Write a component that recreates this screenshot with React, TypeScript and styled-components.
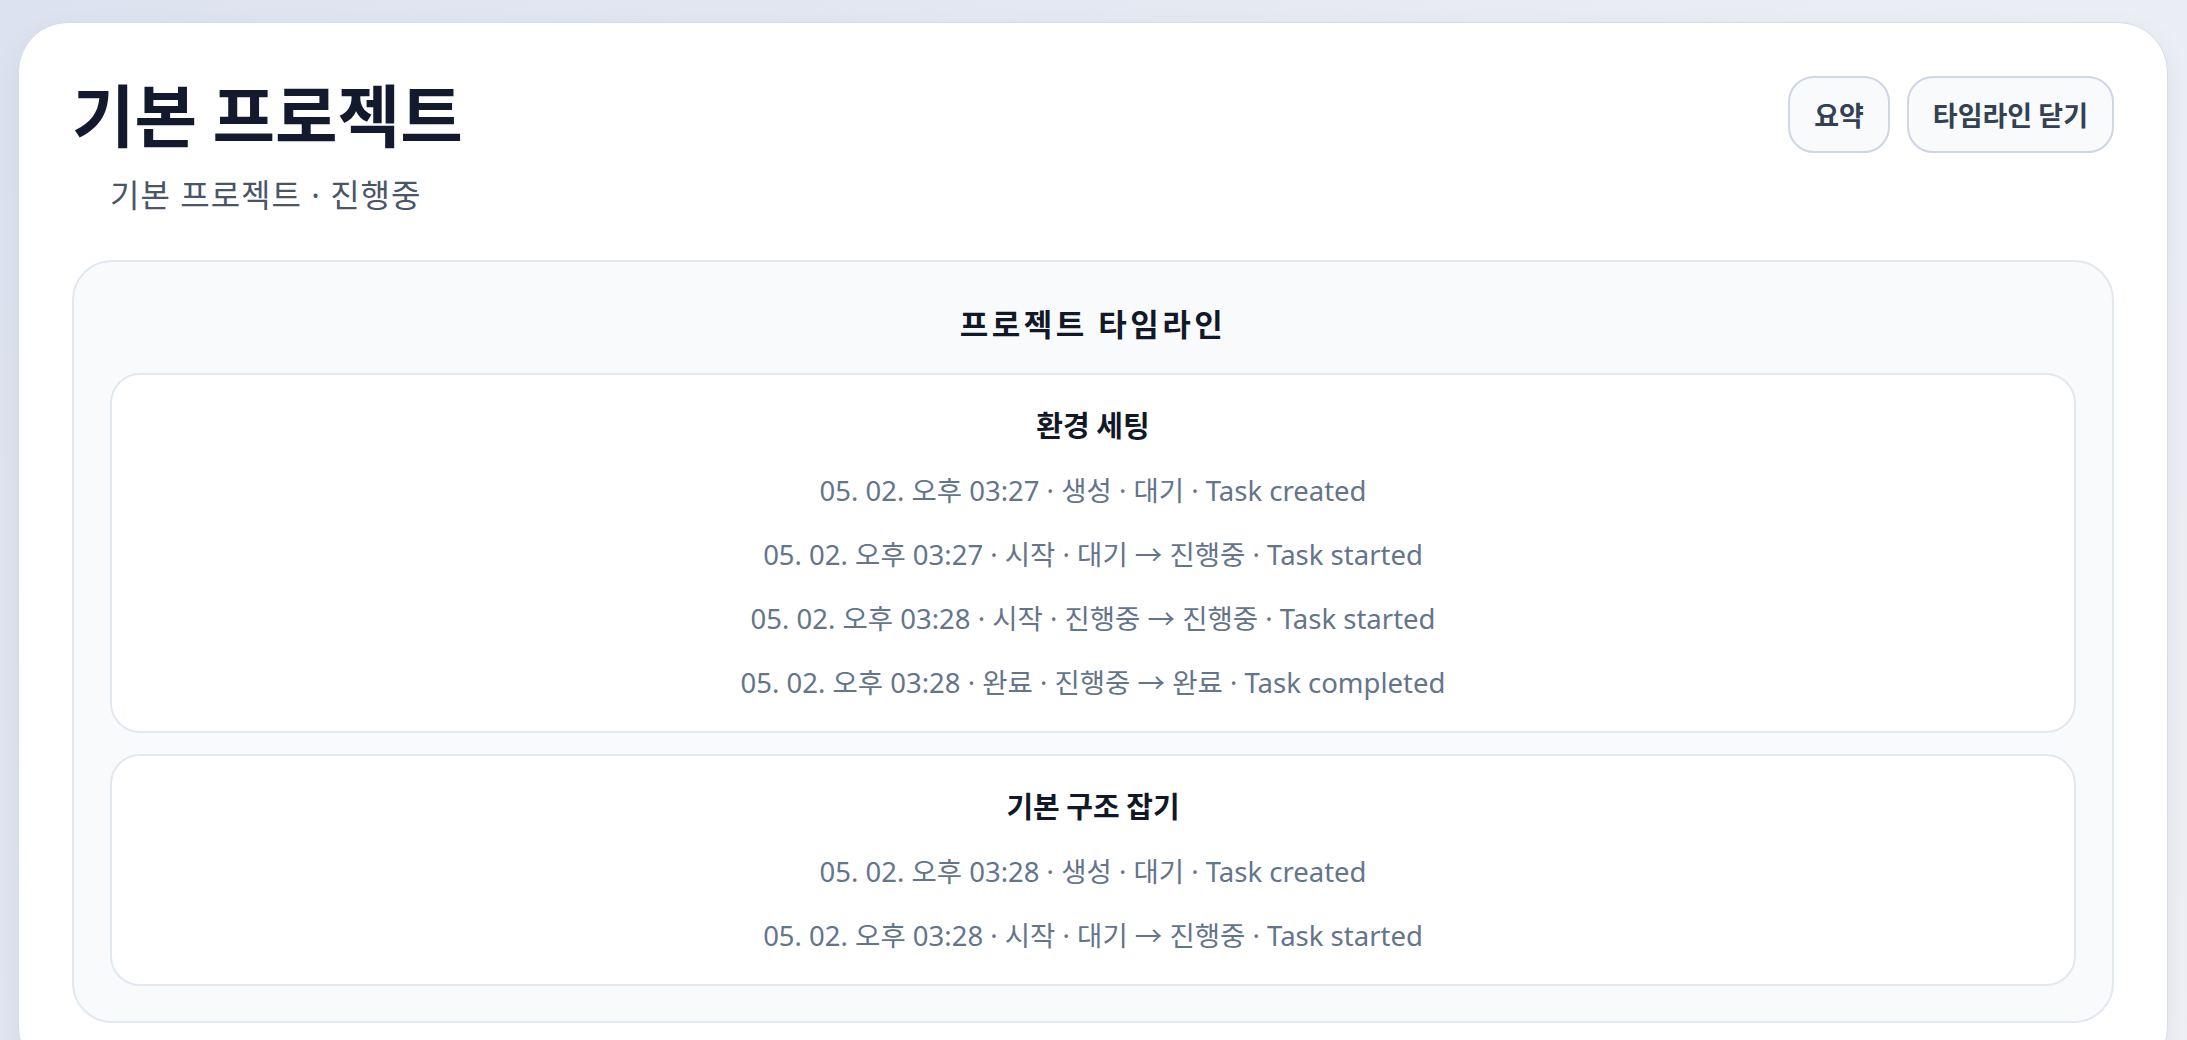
import React from "react";
import styled, { createGlobalStyle } from "styled-components";

type TaskEvent = {
  time: string;
  kind: string;
  status: string;
  note: string;
};

type Task = {
  id: number;
  title: string;
  events: TaskEvent[];
};

const tasks: Task[] = [
  {
    id: 1,
    title: "환경 세팅",
    events: [
      { time: "05. 02. 오후 03:27", kind: "생성", status: "대기", note: "Task created" },
      { time: "05. 02. 오후 03:27", kind: "시작", status: "대기 → 진행중", note: "Task started" },
      { time: "05. 02. 오후 03:28", kind: "시작", status: "진행중 → 진행중", note: "Task started" },
      { time: "05. 02. 오후 03:28", kind: "완료", status: "진행중 → 완료", note: "Task completed" },
    ],
  },
  {
    id: 2,
    title: "기본 구조 잡기",
    events: [
      { time: "05. 02. 오후 03:28", kind: "생성", status: "대기", note: "Task created" },
      { time: "05. 02. 오후 03:28", kind: "시작", status: "대기 → 진행중", note: "Task started" },
    ],
  },
];

const App = () => {
  return (
    <>
      <GlobalStyle />
      <Page>
        <Card>
          <Header>
            <div>
              <Title>기본 프로젝트</Title>
              <Subtitle>기본 프로젝트 · 진행중</Subtitle>
            </div>
            <Actions>
              <Button>요약</Button>
              <Button>타임라인 닫기</Button>
            </Actions>
          </Header>

          <Timeline>
            <TimelineTitle>프로젝트 타임라인</TimelineTitle>
            <TaskList>
              {tasks.map((task) => (
                <TaskCard key={task.id}>
                  <TaskTitle>{task.title}</TaskTitle>
                  {task.events.map((ev, i) => (
                    <EventRow key={i}>
                      {ev.time} · {ev.kind} · {ev.status} · {ev.note}
                    </EventRow>
                  ))}
                </TaskCard>
              ))}
            </TaskList>
          </Timeline>
        </Card>
      </Page>
    </>
  );
};

export default App;

const GlobalStyle = createGlobalStyle`
  html, body {
    margin: 0;
    padding: 0;
  }
  body {
    font-family: "Noto Sans", "Noto Sans CJK KR", sans-serif;
    background: linear-gradient(120deg, #dde2f0 0%, #e8ebf3 55%, #eef0f5 100%);
    min-height: 100vh;
    overflow: hidden;
  }
`;

const Page = styled.div`
  padding: 22px 19px 0 18px;
`;

const Card = styled.div`
  background: #ffffff;
  border: 1px solid #d5dbe9;
  border-radius: 50px;
  padding: 53px;
  box-shadow: 0 10px 30px rgba(30, 41, 59, 0.06);
`;

const Header = styled.div`
  display: flex;
  justify-content: space-between;
  align-items: flex-start;
`;

const Title = styled.h1`
  margin: 0;
  font-family: "Noto Sans CJK KR", sans-serif;
  font-size: 68px;
  font-weight: 700;
  line-height: 74px;
  color: #141a2e;
`;

const Subtitle = styled.p`
  margin: 25px 0 0 38px;
  font-family: "Noto Sans", "Noto Sans CJK KR", sans-serif;
  font-size: 32px;
  line-height: 40px;
  letter-spacing: 1px;
  color: #4b5568;
`;

const Actions = styled.div`
  display: flex;
  gap: 17px;
`;

const Button = styled.button`
  height: 77px;
  padding: 0 24px;
  border: 2px solid #cfd6e3;
  border-radius: 26px;
  background: #f8fafc;
  color: #334155;
  font-family: "Noto Sans CJK KR", sans-serif;
  font-size: 27px;
  font-weight: 700;
  cursor: pointer;
`;

const Timeline = styled.section`
  margin-top: 45px;
  background: #f8fafc;
  border: 2px solid #e2e8f0;
  border-radius: 40px;
  padding: 38px 36px 35px;
`;

const TimelineTitle = styled.h2`
  margin: 0 0 27px;
  text-align: center;
  font-family: "Noto Sans CJK KR", sans-serif;
  font-size: 31px;
  font-weight: 700;
  line-height: 46px;
  letter-spacing: 3.5px;
  color: #111827;
`;

const TaskList = styled.div`
  display: flex;
  flex-direction: column;
  gap: 21px;
`;

const TaskCard = styled.div`
  background: #ffffff;
  border: 2px solid #e2e8f0;
  border-radius: 30px;
  padding: 28px 24px 27px;
  display: flex;
  flex-direction: column;
  align-items: center;
  gap: 22px;
`;

const TaskTitle = styled.h3`
  margin: 0 0 3px;
  font-family: "Noto Sans CJK KR", sans-serif;
  font-size: 29px;
  font-weight: 700;
  line-height: 42px;
  color: #111827;
`;

const EventRow = styled.div`
  font-size: 27.5px;
  line-height: 42px;
  color: #64748b;
`;
